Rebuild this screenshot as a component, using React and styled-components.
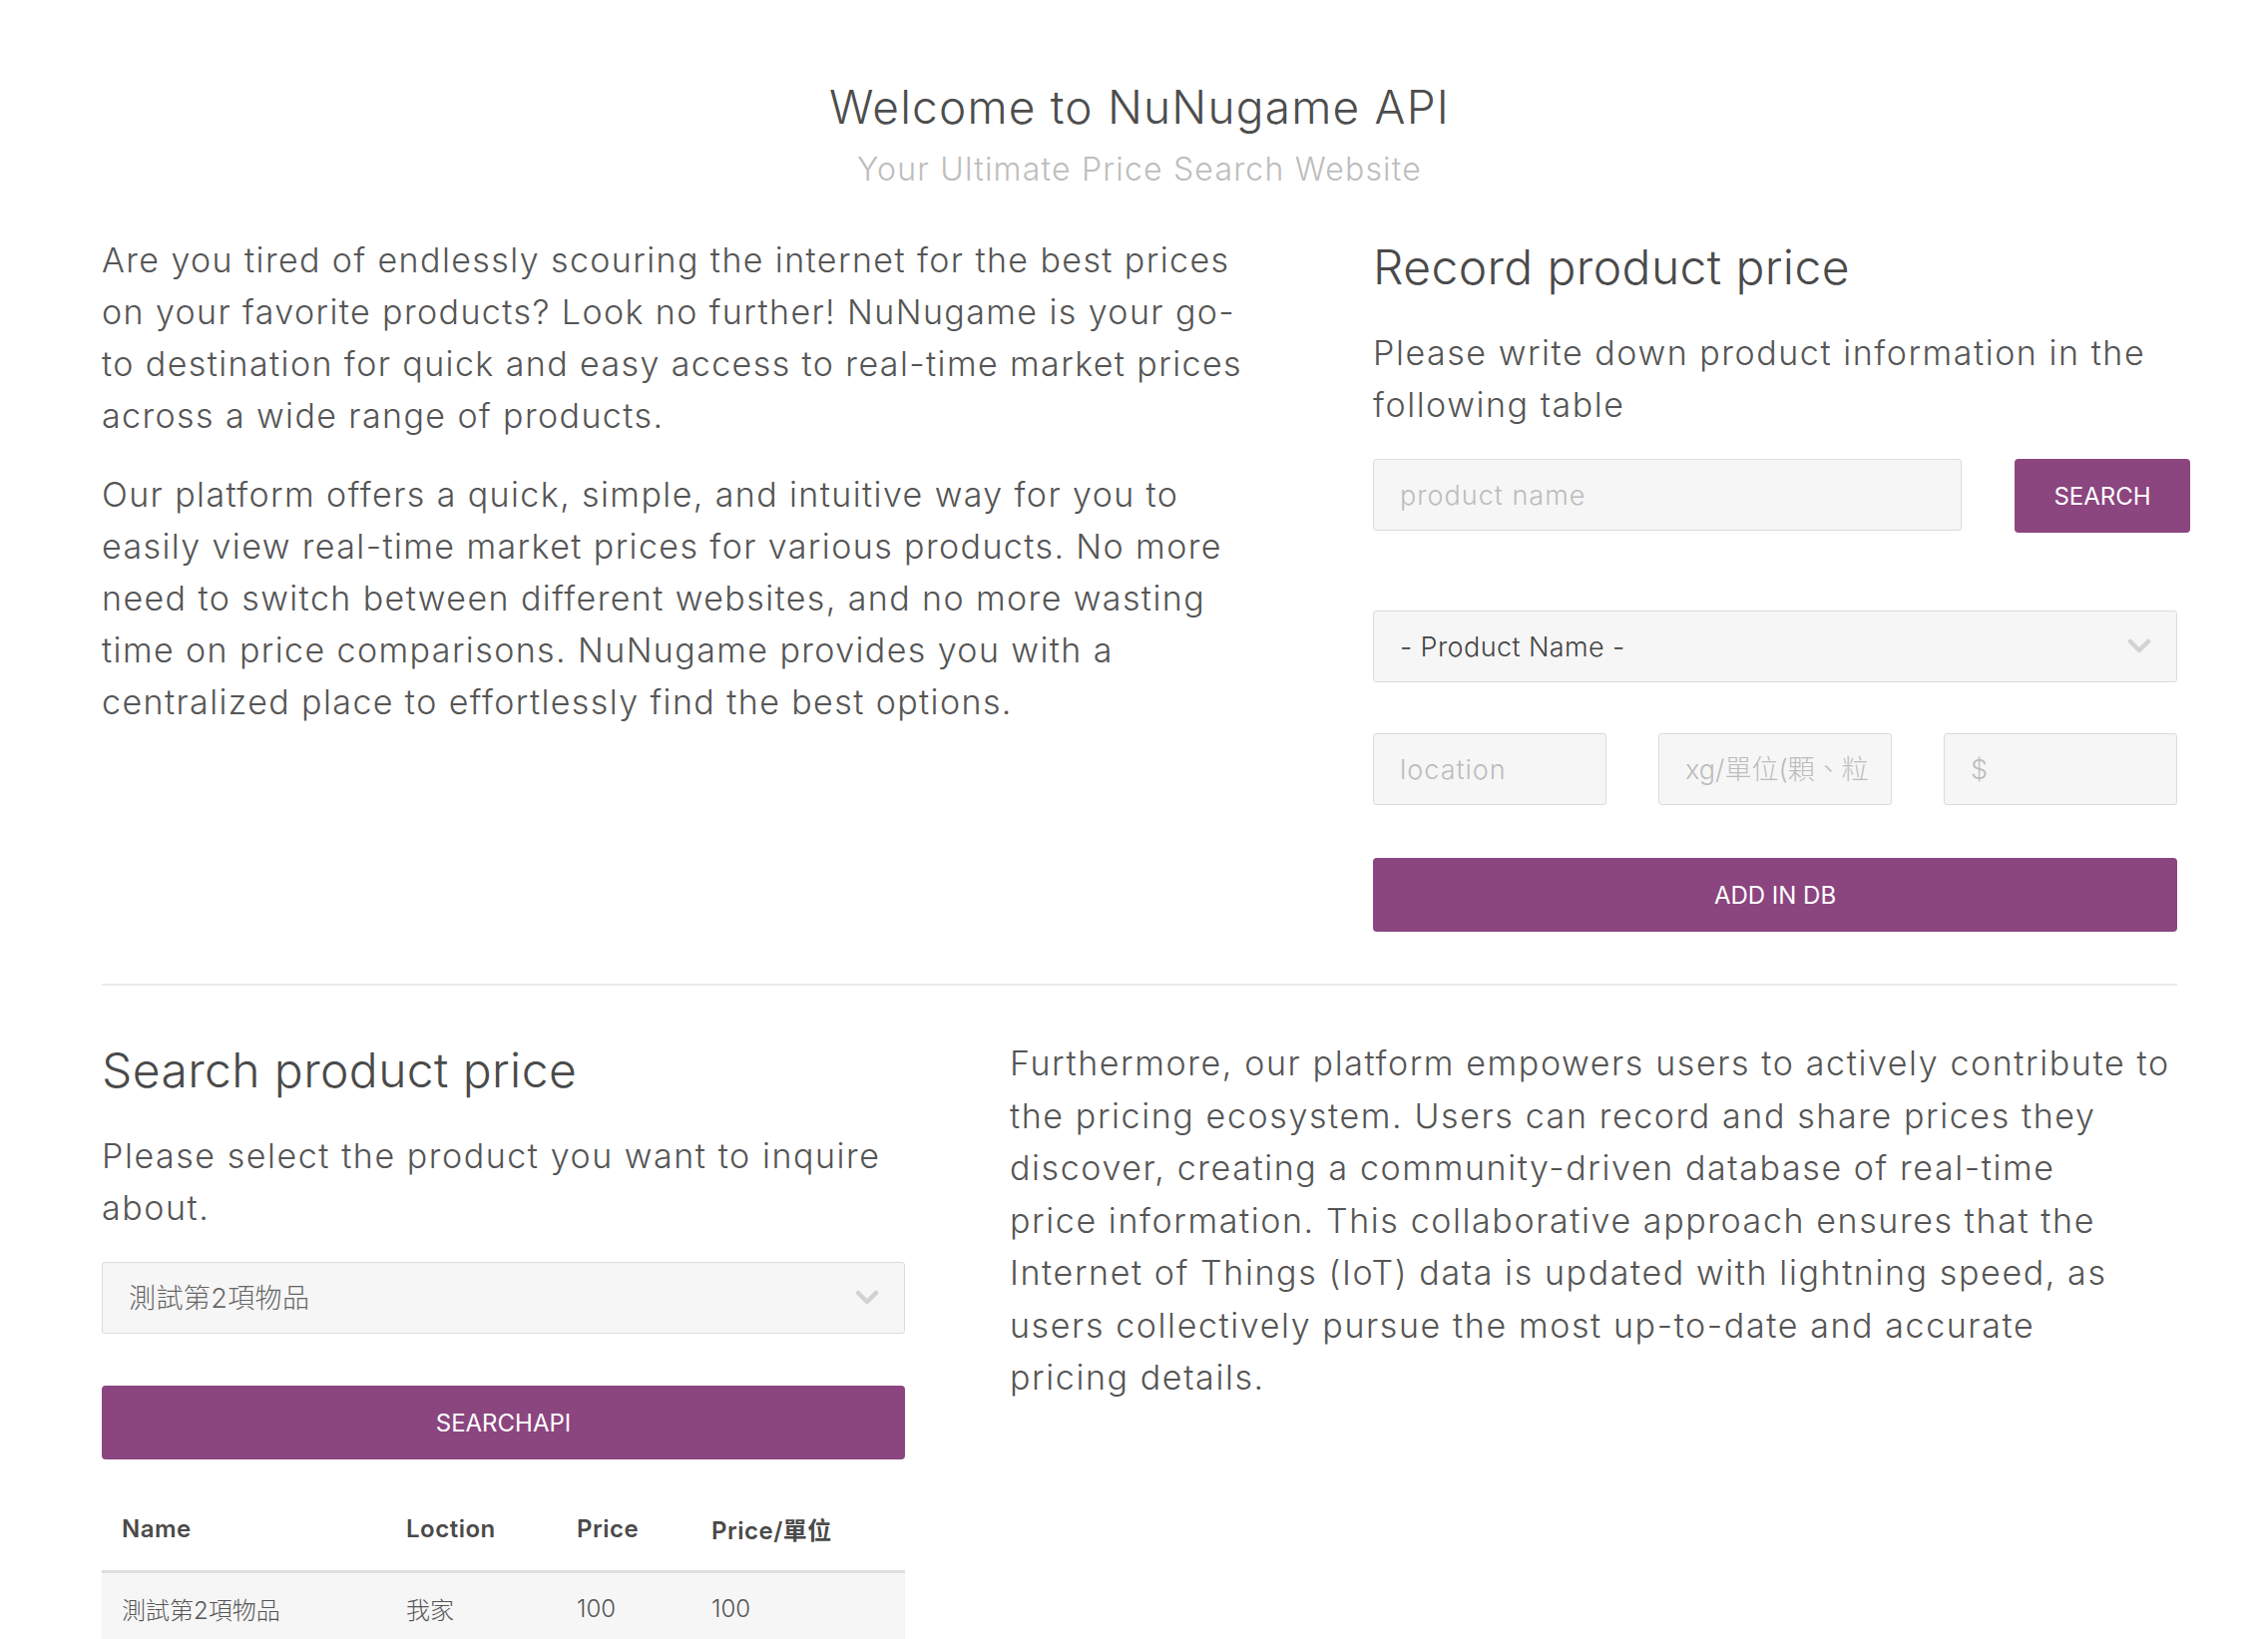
import React from 'react';
import styled, { createGlobalStyle } from 'styled-components';

const GlobalStyle = createGlobalStyle`
  * {
    box-sizing: border-box;
  }

  body {
    margin: 0;
    background: #fff;
    color: #555;
    font-family: Inter, "Noto Sans", "Noto Sans CJK TC", sans-serif;
    font-weight: 300;
  }
`;

const StyledPage = styled.div`
  width: 2080px;
  margin-left: 102px;
  padding-bottom: 80px;
`;

const StyledHeader = styled.header`
  padding-top: 80px;
  text-align: center;

  h1 {
    margin: 0;
    font-size: 46px;
    line-height: 54px;
    font-weight: 300;
    letter-spacing: 1.2px;
    color: #4d4d4d;
  }

  p {
    margin: 14px 0 0;
    font-size: 32px;
    line-height: 44px;
    letter-spacing: 1.2px;
    color: #bdbdbd;
  }
`;

const StyledRow = styled.section`
  display: grid;
  grid-template-columns: ${({ columns }) => columns};
  column-gap: ${({ gap }) => gap}px;
  margin-top: ${({ top }) => top}px;
`;

const StyledText = styled.p`
  margin: 0 0 ${({ bottom }) => bottom || 0}px;
  font-size: 34px;
  line-height: ${({ lh }) => lh || 52}px;
  letter-spacing: ${({ ls }) => ls || 1.4}px;
  color: #555;
  white-space: nowrap;
`;

const StyledHeading = styled.h3`
  margin: 0;
  font-size: 48px;
  line-height: 66px;
  font-weight: 300;
  letter-spacing: 0.4px;
  color: #4a4a4a;
`;

const StyledLead = styled.p`
  margin: 27px 0 28px;
  font-size: 34px;
  line-height: 52px;
  letter-spacing: 1.55px;
  color: #555;
  white-space: nowrap;
`;

const StyledSearchRow = styled.div`
  display: flex;
  gap: 53px;
  align-items: flex-start;
`;

const StyledInput = styled.input`
  display: block;
  flex-shrink: 0;
  width: ${({ width }) => (width ? `${width}px` : '100%')};
  height: 72px;
  padding: 0 ${({ tight }) => (tight ? 20 : 26)}px 0 26px;
  font-family: inherit;
  font-weight: 300;
  font-size: 27px;
  letter-spacing: ${({ tight }) => (tight ? 0 : 1)}px;
  color: #555;
  background: #f6f6f6;
  border: 1px solid #dcdcdc;
  border-radius: 3px;
  outline: none;

  &::placeholder {
    color: #bcbcbc;
  }
`;

const StyledButton = styled.button`
  display: block;
  flex-shrink: 0;
  width: ${({ width }) => (width ? `${width}px` : '100%')};
  height: 74px;
  margin-top: ${({ top }) => top || 0}px;
  font-family: inherit;
  font-size: 24px;
  font-weight: 400;
  text-transform: uppercase;
  color: #fff;
  background: #8b457f;
  border: none;
  border-radius: 4px;
  cursor: pointer;
`;

const StyledSelectWrap = styled.div`
  position: relative;
  margin-top: ${({ top }) => top || 0}px;

  svg {
    position: absolute;
    right: 26px;
    top: 50%;
    transform: translateY(-50%);
    pointer-events: none;
  }
`;

const StyledSelect = styled.select`
  display: block;
  width: 100%;
  height: 72px;
  padding: 0 26px;
  appearance: none;
  font-family: Inter, "Noto Sans", "Noto Sans CJK TC", sans-serif;
  font-weight: 300;
  font-size: 27px;
  letter-spacing: 0.4px;
  color: ${({ muted }) => (muted ? '#666' : '#444')};
  background: #f6f6f6;
  border: 1px solid #dcdcdc;
  border-radius: 3px;
  outline: none;
`;

const StyledTriple = styled.div`
  display: grid;
  grid-template-columns: repeat(3, 1fr);
  column-gap: 52px;
  margin-top: 51px;
`;

const StyledDivider = styled.hr`
  margin: 52px 0 0;
  border: none;
  border-top: 2px solid #ebebeb;
`;

const StyledTable = styled.table`
  width: 100%;
  margin-top: 28px;
  border-collapse: collapse;
  table-layout: fixed;
  font-size: 24px;

  th {
    height: 84px;
    padding: 0 20px;
    text-align: left;
    font-weight: 600;
    letter-spacing: 0.5px;
    color: #4a4a4a;
    border-bottom: 3px solid #dedede;
  }

  td {
    height: 74px;
    padding: 0 20px;
    color: #555;
    background: #f6f6f6;
  }
`;

const Chevron = () => (
  <svg width="24" height="16" viewBox="0 0 24 16">
    <polyline points="3,3 12,12 21,3" fill="none" stroke="#d2d2d2" strokeWidth="4.5" strokeLinecap="round" strokeLinejoin="round" />
  </svg>
);

const App = () => (
  <>
    <GlobalStyle />
    <StyledPage>
      <StyledHeader>
        <h1>Welcome to NuNugame API</h1>
        <p>Your Ultimate Price Search Website</p>
      </StyledHeader>

      <StyledRow columns="1188px 806px" gap={86} top={43}>
        <div>
          <StyledText bottom={27}>
            Are you tired of endlessly scouring the internet for the best prices<br />
            on your favorite products? Look no further! NuNugame is your go-<br />
            to destination for quick and easy access to real-time market prices<br />
            across a wide range of products.
          </StyledText>
          <StyledText>
            Our platform offers a quick, simple, and intuitive way for you to<br />
            easily view real-time market prices for various products. No more<br />
            need to switch between different websites, and no more wasting<br />
            time on price comparisons. NuNugame provides you with a<br />
            centralized place to effortlessly find the best options.
          </StyledText>
        </div>

        <div>
          <StyledHeading>Record product price</StyledHeading>
          <StyledLead>
            Please write down product information in the<br />
            following table
          </StyledLead>
          <StyledSearchRow>
            <StyledInput width={590} placeholder="product name" />
            <StyledButton width={176} type="button">Search</StyledButton>
          </StyledSearchRow>
          <StyledSelectWrap top={78}>
            <StyledSelect defaultValue="">
              <option value="">- Product Name -</option>
            </StyledSelect>
            <Chevron />
          </StyledSelectWrap>
          <StyledTriple>
            <StyledInput placeholder="location" />
            <StyledInput tight placeholder="xg/單位(顆、粒" />
            <StyledInput placeholder="$" />
          </StyledTriple>
          <StyledButton top={53} type="button">Add in DB</StyledButton>
        </div>
      </StyledRow>

      <StyledDivider />

      <StyledRow columns="805px 1fr" gap={105} top={52}>
        <div>
          <StyledHeading>Search product price</StyledHeading>
          <StyledLead>
            Please select the product you want to inquire<br />
            about.
          </StyledLead>
          <StyledSelectWrap>
            <StyledSelect muted defaultValue="2">
              <option value="2">測試第2項物品</option>
            </StyledSelect>
            <Chevron />
          </StyledSelectWrap>
          <StyledButton top={52} type="button">SearchAPI</StyledButton>
          <StyledTable>
            <colgroup>
              <col style={{ width: '285px' }} />
              <col style={{ width: '171px' }} />
              <col style={{ width: '135px' }} />
              <col />
            </colgroup>
            <thead>
              <tr>
                <th>Name</th>
                <th>Loction</th>
                <th>Price</th>
                <th>Price/單位</th>
              </tr>
            </thead>
            <tbody>
              <tr>
                <td>測試第2項物品</td>
                <td>我家</td>
                <td>100</td>
                <td>100</td>
              </tr>
            </tbody>
          </StyledTable>
        </div>

        <StyledText lh={52.5} ls={1.6}>
          Furthermore, our platform empowers users to actively contribute to<br />
          the pricing ecosystem. Users can record and share prices they<br />
          discover, creating a community-driven database of real-time<br />
          price information. This collaborative approach ensures that the<br />
          Internet of Things (IoT) data is updated with lightning speed, as<br />
          users collectively pursue the most up-to-date and accurate<br />
          pricing details.
        </StyledText>
      </StyledRow>
    </StyledPage>
  </>
);

export default App;
